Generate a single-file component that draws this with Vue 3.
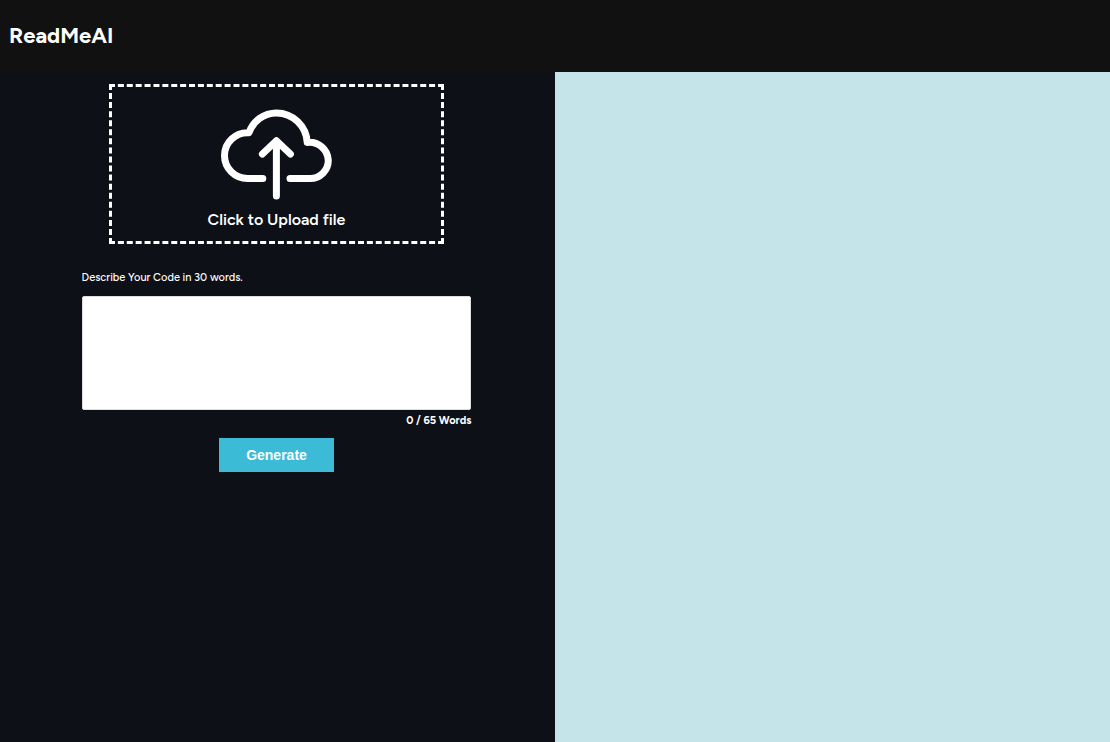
<script setup>
import { ref, computed } from 'vue'

const description = ref('')
const wordCount = computed(() => description.value.split(/\s+/).filter(Boolean).length)
</script>

<template>
  <div class="page">
    <header class="bar">
      <h1 class="brand">ReadMeAI</h1>
    </header>
    <main class="panels">
      <form class="editor" @submit.prevent>
        <button type="button" class="upload">
          <svg class="cloud" viewBox="0 0 113 92" aria-hidden="true">
            <path d="M42.8 69.5H27.5A23 23 0 0 1 4.5 46.5A23 23 0 0 1 29 23.7A29 29 0 0 1 56.4 4A31 31 0 0 1 87.2 33.4A19 19 0 0 1 108.3 51.3A18.2 18.2 0 0 1 90 69.5H70" />
            <path d="M56.4 87V32M42.4 45L56.4 31.8L70.4 45" />
          </svg>
          <span>Click to Upload file</span>
        </button>
        <div class="field">
          <label class="caption" for="description">Describe Your Code in 30 words.</label>
          <textarea id="description" v-model="description" class="text"></textarea>
          <p class="count">{{ wordCount }} / 65 Words</p>
        </div>
        <button type="submit" class="generate">Generate</button>
      </form>
      <section class="preview" aria-label="Preview"></section>
    </main>
  </div>
</template>

<style>
body {
  margin: 0;
  background: #0d1017;
}
</style>

<style scoped>
.page {
  display: flex;
  flex-direction: column;
  min-height: 100vh;
  color: #fff;
  font-family: Figtree, "Open Sans", sans-serif;
}

.bar {
  display: flex;
  align-items: center;
  height: 72px;
  padding: 0 9px;
  background: #111;
}

.brand {
  margin: 0;
  font-size: 22px;
  line-height: 28px;
  font-weight: 700;
}

.panels {
  display: grid;
  grid-template-columns: 1fr 1fr;
  flex: 1;
}

.editor {
  display: flex;
  flex-direction: column;
  align-items: center;
  padding: 12px 4px 12px 2px;
  background: #0d1017;
}

.upload {
  display: flex;
  flex-direction: column;
  align-items: center;
  gap: 9px;
  box-sizing: border-box;
  width: 61%;
  height: 160px;
  padding: 22px 0 0;
  border: 3px dashed #fff;
  background: none;
  color: #fff;
  font-family: inherit;
  font-size: 16px;
  line-height: 20px;
  font-weight: 600;
  cursor: pointer;
}

.cloud {
  width: 113px;
  height: 92px;
  fill: none;
  stroke: #fff;
  stroke-width: 7;
  stroke-linecap: round;
  stroke-linejoin: round;
}

.field {
  display: flex;
  flex-direction: column;
  width: 71%;
  margin-top: 26px;
}

.caption {
  font-size: 11px;
  line-height: 16px;
  font-weight: 500;
}

.text {
  box-sizing: border-box;
  height: 114px;
  margin-top: 10px;
  padding: 6px;
  border: 1px solid #ddd;
  border-radius: 2px;
  background: #fff;
  color: #111;
  font-size: 12px;
  resize: none;
}

.count {
  margin: 3px 0 0;
  text-align: right;
  font-size: 11px;
  line-height: 16px;
  font-weight: 700;
}

.generate {
  margin-top: 9px;
  width: 115px;
  height: 34px;
  padding: 0;
  border: 0;
  background: #3bbbd5;
  color: #fff;
  font-family: "Liberation Sans", Arial, sans-serif;
  font-size: 14px;
  font-weight: 700;
  cursor: pointer;
}

.preview {
  background: #c4e4ea;
}
</style>
